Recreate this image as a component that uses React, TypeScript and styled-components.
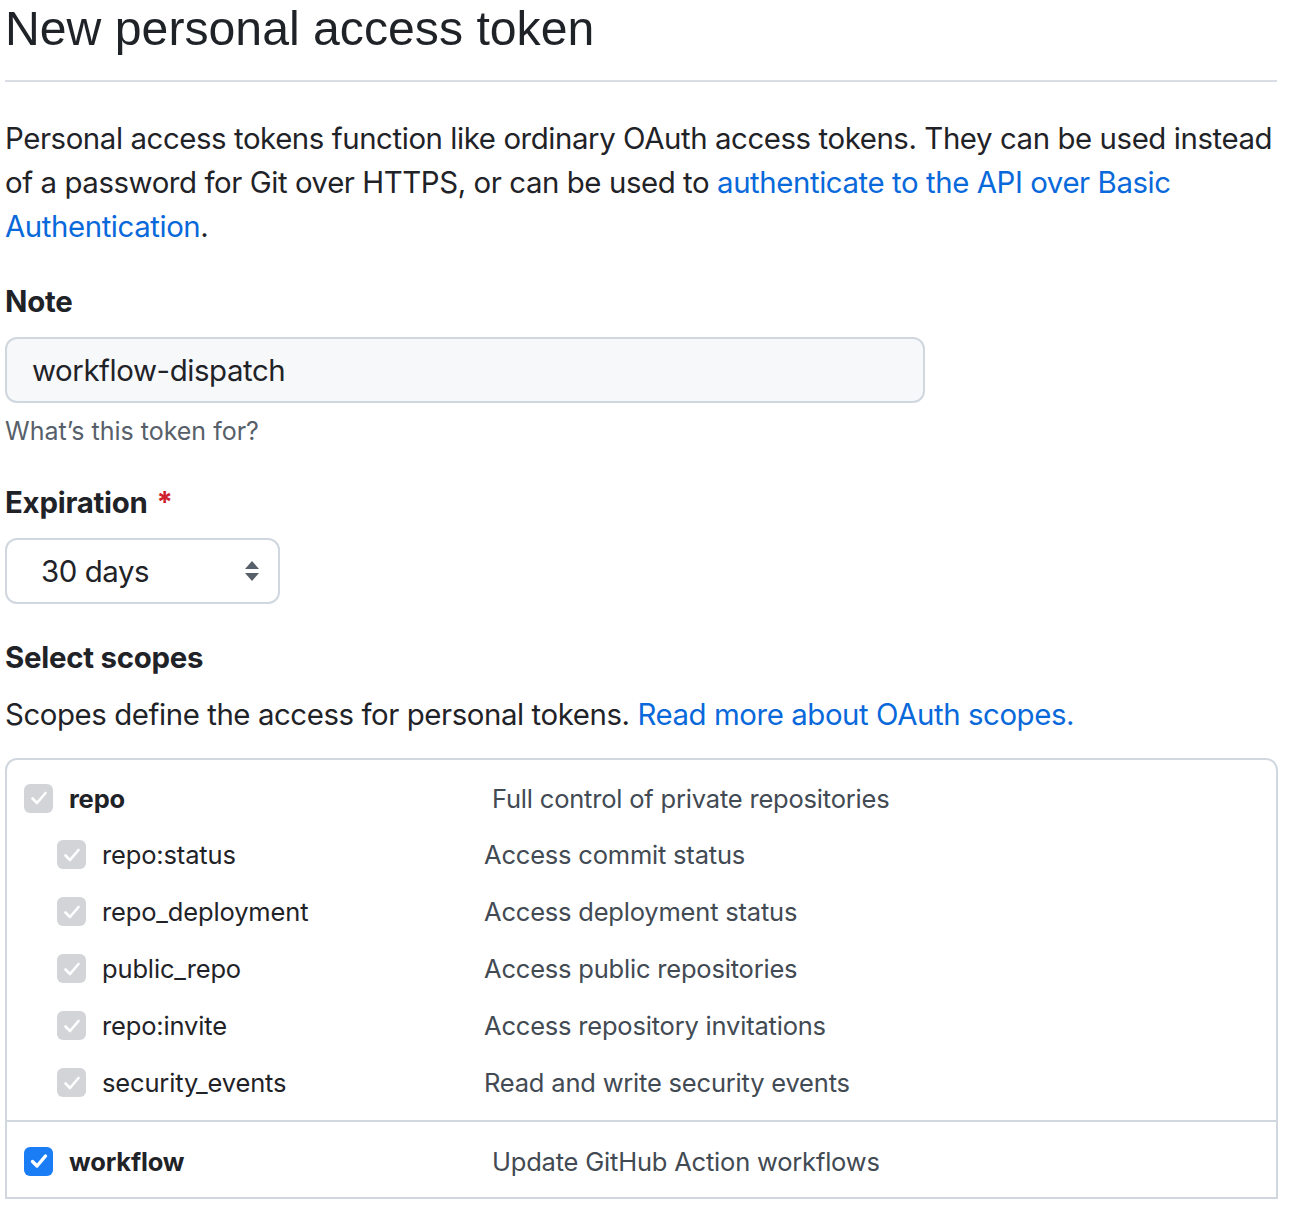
import React from "react";
import styled, { createGlobalStyle } from "styled-components";

const Global = createGlobalStyle`
  html, body { margin: 0; padding: 0; background: #ffffff; }
  body { font-family: Inter, "Noto Sans", "Liberation Sans", sans-serif; color: #1f2328; }
`;

const Page = styled.div`
  width: 1272px;
  padding-left: 5px;
`;

const Header = styled.div`
  height: 80px;
  border-bottom: 2px solid #d8dee4;
`;

const Title = styled.h1`
  margin: 0;
  font-family: "Liberation Sans", Arial, sans-serif;
  font-weight: 400;
  font-size: 48.2px;
  line-height: 56px;
  color: #1f2328;
`;

const Intro = styled.p`
  margin: 35px 0 0;
  font-size: 29.4px;
  line-height: 44px;
  letter-spacing: -0.42px;
`;

const Link = styled.a`
  color: #0969da;
  text-decoration: none;
`;

const Label = styled.div<{ $top: number }>`
  margin-top: ${(p) => p.$top}px;
  font-size: 29.4px;
  line-height: 44px;
  font-weight: 700;
  letter-spacing: -0.25px;
`;

const Required = styled.span`
  color: #cf222e;
  margin-left: 9px;
`;

const TextInput = styled.div`
  margin-top: 13px;
  box-sizing: border-box;
  width: 920px;
  height: 66px;
  background: #f6f8fa;
  border: 2px solid #d0d7de;
  border-radius: 12px;
  display: flex;
  align-items: center;
  padding-left: 25px;
  font-size: 29.4px;
  letter-spacing: -0.42px;
`;

const Hint = styled.div`
  margin-top: 9px;
  font-size: 25px;
  line-height: 38px;
  color: #57606a;
`;

const Select = styled.div`
  margin-top: 13px;
  box-sizing: border-box;
  width: 275px;
  height: 66px;
  background: #ffffff;
  border: 2px solid #d0d7de;
  border-radius: 12px;
  display: flex;
  align-items: center;
  justify-content: space-between;
  padding: 0 17px 0 34px;
  font-size: 29.4px;
  letter-spacing: -0.42px;
`;

const Text = styled.div<{ $top: number }>`
  margin-top: ${(p) => p.$top}px;
  font-size: 29.4px;
  line-height: 44px;
  letter-spacing: -0.42px;
`;

const ScopeBox = styled.div`
  margin-top: 21px;
  box-sizing: border-box;
  width: 1273px;
  border: 2px solid #d0d7de;
  border-radius: 12px 12px 0 0;
`;

const Group = styled.div<{ $pt: number; $pb: number; $divider?: boolean }>`
  padding: ${(p) => p.$pt}px 0 ${(p) => p.$pb}px;
  border-top: ${(p) => (p.$divider ? "2px solid #d0d7de" : "none")};
`;

const Row = styled.div<{ $indent: number; $height: number }>`
  display: flex;
  align-items: center;
  height: ${(p) => p.$height}px;
  padding-left: ${(p) => p.$indent}px;
`;

const Name = styled.div<{ $width: number; $bold?: boolean }>`
  display: flex;
  align-items: center;
  gap: 16px;
  width: ${(p) => p.$width}px;
  font-size: 25.5px;
  letter-spacing: -0.15px;
  font-weight: ${(p) => (p.$bold ? 700 : 400)};
  color: #1f2328;
`;

const Desc = styled.div`
  font-size: 25.5px;
  letter-spacing: -0.2px;
  color: #424a53;
`;

const Box = styled.span<{ $checked?: boolean }>`
  display: inline-flex;
  align-items: center;
  justify-content: center;
  width: 29px;
  height: 29px;
  border-radius: 6px;
  background: ${(p) => (p.$checked ? "#1a7df5" : "#d2d4d8")};
  flex: none;
`;

const Check = ({ checked }: { checked?: boolean }) => (
  <Box $checked={checked}>
    <svg width="24" height="24" viewBox="0 0 24 24">
      <path
        d="M5.5 12.5 L10 17 L18.5 7"
        fill="none"
        stroke="#ffffff"
        strokeWidth={checked ? 3.4 : 2.6}
        strokeLinecap="round"
        strokeLinejoin="round"
      />
    </svg>
  </Box>
);

const subScopes: [string, string][] = [
  ["repo:status", "Access commit status"],
  ["repo_deployment", "Access deployment status"],
  ["public_repo", "Access public repositories"],
  ["repo:invite", "Access repository invitations"],
  ["security_events", "Read and write security events"],
];

export default function App() {
  return (
    <>
      <Global />
      <Page>
        <Header>
          <Title>New personal access token</Title>
        </Header>
        <Intro>
          Personal access tokens function like ordinary OAuth access tokens. They can be used instead
          of a password for Git over HTTPS, or can be used to{" "}
          <Link href="#">authenticate to the API over Basic Authentication</Link>.
        </Intro>

        <Label $top={31}>Note</Label>
        <TextInput>workflow-dispatch</TextInput>
        <Hint>What’s this token for?</Hint>

        <Label $top={31}>
          Expiration<Required>*</Required>
        </Label>
        <Select>
          <span>30 days</span>
          <svg width="18" height="24" viewBox="0 0 18 24">
            <path d="M9 2 L16 10 H2 Z" fill="#57606a" />
            <path d="M9 22 L16 14 H2 Z" fill="#57606a" />
          </svg>
        </Select>

        <Label $top={32}>Select scopes</Label>
        <Text $top={13}>
          Scopes define the access for personal tokens.{" "}
          <Link href="#">Read more about OAuth scopes.</Link>
        </Text>

        <ScopeBox>
          <Group $pt={10} $pb={9}>
            <Row $indent={17} $height={56}>
              <Name $width={468} $bold>
                <Check />
                repo
              </Name>
              <Desc>Full control of private repositories</Desc>
            </Row>
            {subScopes.map(([n, d]) => (
              <Row key={n} $indent={50} $height={57}>
                <Name $width={427}>
                  <Check />
                  {n}
                </Name>
                <Desc>{d}</Desc>
              </Row>
            ))}
          </Group>
          <Group $pt={11} $pb={8} $divider>
            <Row $indent={17} $height={56}>
              <Name $width={468} $bold>
                <Check checked />
                workflow
              </Name>
              <Desc>Update GitHub Action workflows</Desc>
            </Row>
          </Group>
        </ScopeBox>
      </Page>
    </>
  );
}
